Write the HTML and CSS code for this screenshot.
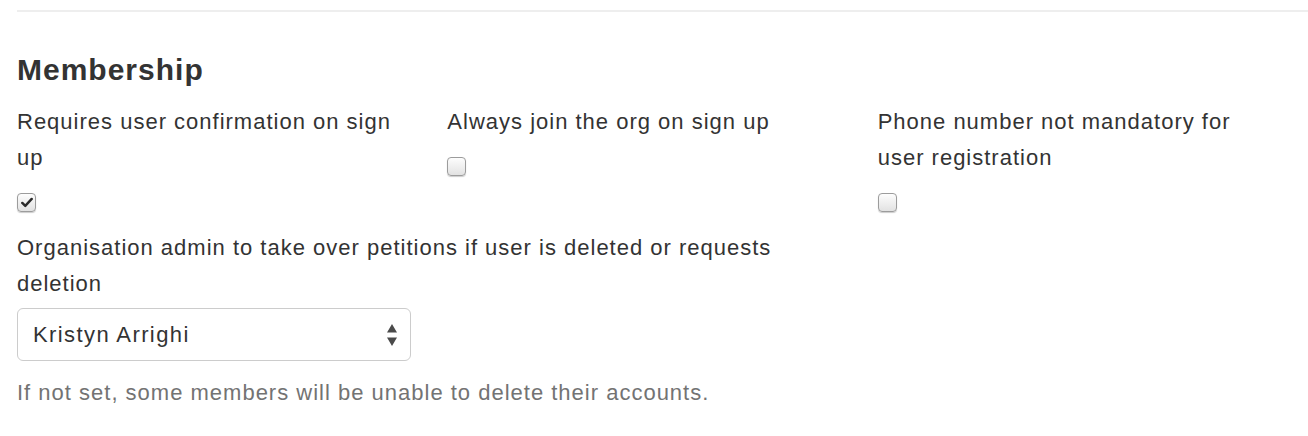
FILE: index.html
```html
<!DOCTYPE html>
<html lang="en">
<head>
  <meta charset="UTF-8">
  <title>Membership settings</title>
  <link rel="stylesheet" href="styles.css">
</head>
<body>
  <div class="container">
    <hr class="divider">

    <!-- Membership section -->
    <h2 class="section-title">Membership</h2>
    <div class="row">
      <div class="col">
        <label class="field-label">Requires user confirmation on sign up</label>
        <span class="checkbox checked">
          <svg width="14" height="12" viewBox="0 0 14 12"><path d="M1.5 6.5 L5 10 L12.5 1.8" fill="none" stroke="#2b2b2b" stroke-width="2.8" stroke-linecap="round" stroke-linejoin="round"/></svg>
        </span>
      </div>
      <div class="col">
        <label class="field-label">Always join the org on sign up</label>
        <span class="checkbox"></span>
      </div>
      <div class="col">
        <label class="field-label">Phone number not mandatory for user registration</label>
        <span class="checkbox"></span>
      </div>
    </div>

    <div class="row row-second">
      <div class="col-wide">
        <label class="field-label">Organisation admin to take over petitions if user is deleted or requests deletion</label>
        <div class="select-wrap">
          <select class="select">
            <option>Kristyn Arrighi</option>
          </select>
          <svg class="select-arrows" width="12" height="24" viewBox="0 0 12 24"><path d="M6 1 L11 9.5 H1 Z M1 14.5 H11 L6 23 Z" fill="#4a4a4a"/></svg>
        </div>
        <p class="help-text">If not set, some members will be unable to delete their accounts.</p>
      </div>
    </div>
  </div>
</body>
</html>
```

FILE: styles.css
```css
/* Base page */
body {
  font-family: "Liberation Sans", Arial, sans-serif;
  font-size: 22px;
  letter-spacing: 1px;
  color: #333;
  margin: 0;
  padding: 0;
  background: #fff;
}
.container {
  padding: 10px 0 0 17px;
}
.divider {
  border: 0;
  border-top: 2px solid #eee;
  margin: 0;
}
.section-title {
  font-size: 30px;
  font-weight: bold;
  letter-spacing: 1px;
  line-height: 34px;
  margin: 41px 0 17px;
}
/* Three column row */
.row {
  display: flex;
}
.row-second {
  margin-top: 18px;
}
.col {
  width: 401px;
  margin-right: 32px;
}
.col-wide {
  width: 834px;
}
.field-label {
  display: block;
  line-height: 36px;
}
.checkbox {
  display: flex;
  align-items: center;
  justify-content: center;
  width: 17px;
  height: 17px;
  margin-top: 17px;
  border: 1px solid #9c9c9c;
  border-radius: 4px;
  background: linear-gradient(#fdfdfd, #e2e2e2);
  box-shadow: 0 1px 1px rgba(0, 0, 0, 0.2);
}
.checkbox svg {
  width: 12px;
  height: 11px;
}
/* Select */
.select-wrap {
  position: relative;
  width: 394px;
  margin-top: 6px;
}
.select {
  appearance: none;
  -webkit-appearance: none;
  display: block;
  width: 100%;
  height: 53px;
  padding: 0 15px;
  font-family: inherit;
  font-size: 22px;
  letter-spacing: 1.4px;
  color: #333;
  background: #fff;
  border: 1px solid #ccc;
  border-radius: 6px;
}
.select-arrows {
  position: absolute;
  right: 13px;
  top: 15px;
}
.help-text {
  color: #737373;
  line-height: 36px;
  margin: 14px 0 0;
}
```
